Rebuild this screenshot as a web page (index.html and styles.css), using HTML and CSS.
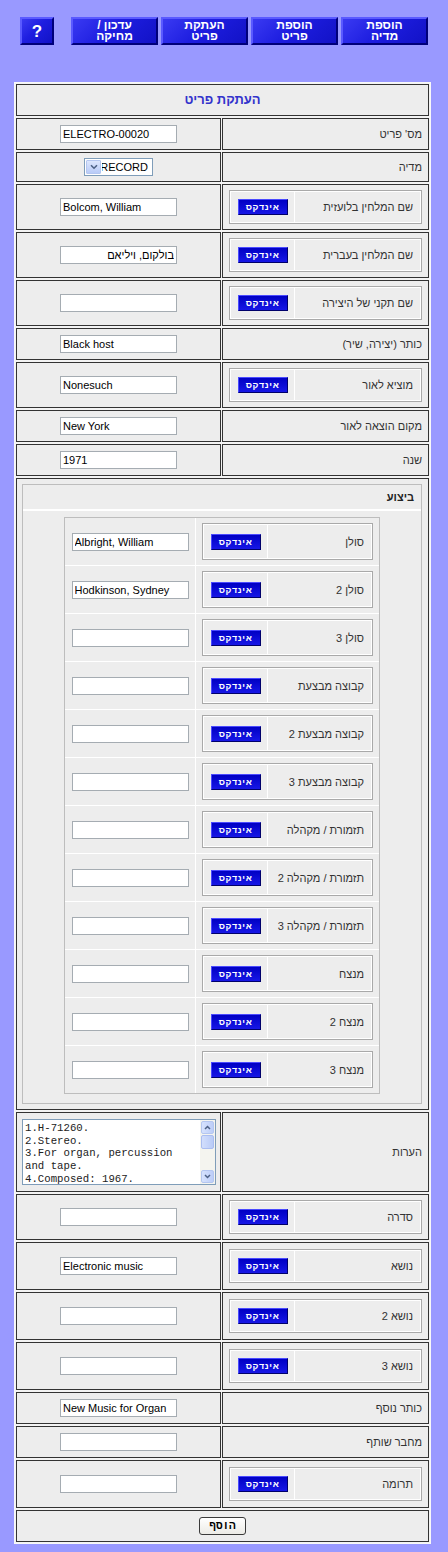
FILE: index.html
```html
<!DOCTYPE html>
<html lang="he" dir="rtl">
<head>
<meta charset="utf-8">
<title>העתקת פריט</title>
<link rel="stylesheet" href="styles.css">
</head>
<body>
<nav class="topnav">
  <a class="navbtn" href="#">הוספת<br>מדיה</a>
  <a class="navbtn" href="#">הוספת<br>פריט</a>
  <a class="navbtn" href="#">העתקת<br>פריט</a>
  <a class="navbtn" href="#">עדכון /<br>מחיקה</a>
  <a class="navbtn help" href="#">?</a>
</nav>

<form class="sheet">
  <div class="cell title">העתקת פריט</div>

  <div class="cell lbl">מס' פריט</div>
  <div class="cell fld"><input class="txt" dir="ltr" value="ELECTRO-00020"></div>

  <div class="cell lbl">מדיה</div>
  <div class="cell fld fld-sel">
    <span class="select">
      <span class="select-arrow"><svg width="8" height="6" viewBox="0 0 8 6"><path d="M1 1.2l3 3 3-3" stroke="#4d6185" stroke-width="1.6" fill="none"/></svg></span>
      <select><option>RECORD</option></select>
    </span>
  </div>

  <div class="cell lbl idx"><div class="ibox"><span class="ibox-label">שם המלחין בלועזית</span><span class="ibox-btn"><button type="button" class="idxbtn">אינדקס</button></span></div></div>
  <div class="cell fld"><input class="txt" dir="ltr" value="Bolcom, William"></div>

  <div class="cell lbl idx"><div class="ibox"><span class="ibox-label">שם המלחין בעברית</span><span class="ibox-btn"><button type="button" class="idxbtn">אינדקס</button></span></div></div>
  <div class="cell fld"><input class="txt" dir="rtl" value="בולקום, ויליאם"></div>

  <div class="cell lbl idx"><div class="ibox"><span class="ibox-label">שם תקני של היצירה</span><span class="ibox-btn"><button type="button" class="idxbtn">אינדקס</button></span></div></div>
  <div class="cell fld"><input class="txt" dir="ltr" value=""></div>

  <div class="cell lbl">כותר (יצירה, שיר)</div>
  <div class="cell fld"><input class="txt" dir="ltr" value="Black host"></div>

  <div class="cell lbl idx"><div class="ibox"><span class="ibox-label">מוציא לאור</span><span class="ibox-btn"><button type="button" class="idxbtn">אינדקס</button></span></div></div>
  <div class="cell fld"><input class="txt" dir="ltr" value="Nonesuch"></div>

  <div class="cell lbl">מקום הוצאה לאור</div>
  <div class="cell fld"><input class="txt" dir="ltr" value="New York"></div>

  <div class="cell lbl">שנה</div>
  <div class="cell fld"><input class="txt" dir="ltr" value="1971"></div>

  <div class="cell perf">
    <div class="perf-box">
      <div class="perf-head">ביצוע</div>
      <div class="perf-body">
        <div class="perf-table">
          <div class="pcell plab"><div class="ibox ibox-sm"><span class="ibox-label">סולן</span><span class="ibox-btn"><button type="button" class="idxbtn">אינדקס</button></span></div></div>
          <div class="pcell pinp"><input class="txt" dir="ltr" value="Albright, William"></div>

          <div class="pcell plab"><div class="ibox ibox-sm"><span class="ibox-label">סולן 2</span><span class="ibox-btn"><button type="button" class="idxbtn">אינדקס</button></span></div></div>
          <div class="pcell pinp"><input class="txt" dir="ltr" value="Hodkinson, Sydney"></div>

          <div class="pcell plab"><div class="ibox ibox-sm"><span class="ibox-label">סולן 3</span><span class="ibox-btn"><button type="button" class="idxbtn">אינדקס</button></span></div></div>
          <div class="pcell pinp"><input class="txt" dir="ltr" value=""></div>

          <div class="pcell plab"><div class="ibox ibox-sm"><span class="ibox-label">קבוצה מבצעת</span><span class="ibox-btn"><button type="button" class="idxbtn">אינדקס</button></span></div></div>
          <div class="pcell pinp"><input class="txt" dir="ltr" value=""></div>

          <div class="pcell plab"><div class="ibox ibox-sm"><span class="ibox-label">קבוצה מבצעת 2</span><span class="ibox-btn"><button type="button" class="idxbtn">אינדקס</button></span></div></div>
          <div class="pcell pinp"><input class="txt" dir="ltr" value=""></div>

          <div class="pcell plab"><div class="ibox ibox-sm"><span class="ibox-label">קבוצה מבצעת 3</span><span class="ibox-btn"><button type="button" class="idxbtn">אינדקס</button></span></div></div>
          <div class="pcell pinp"><input class="txt" dir="ltr" value=""></div>

          <div class="pcell plab"><div class="ibox ibox-sm"><span class="ibox-label">תזמורת / מקהלה</span><span class="ibox-btn"><button type="button" class="idxbtn">אינדקס</button></span></div></div>
          <div class="pcell pinp"><input class="txt" dir="ltr" value=""></div>

          <div class="pcell plab"><div class="ibox ibox-sm"><span class="ibox-label">תזמורת / מקהלה 2</span><span class="ibox-btn"><button type="button" class="idxbtn">אינדקס</button></span></div></div>
          <div class="pcell pinp"><input class="txt" dir="ltr" value=""></div>

          <div class="pcell plab"><div class="ibox ibox-sm"><span class="ibox-label">תזמורת / מקהלה 3</span><span class="ibox-btn"><button type="button" class="idxbtn">אינדקס</button></span></div></div>
          <div class="pcell pinp"><input class="txt" dir="ltr" value=""></div>

          <div class="pcell plab"><div class="ibox ibox-sm"><span class="ibox-label">מנצח</span><span class="ibox-btn"><button type="button" class="idxbtn">אינדקס</button></span></div></div>
          <div class="pcell pinp"><input class="txt" dir="ltr" value=""></div>

          <div class="pcell plab"><div class="ibox ibox-sm"><span class="ibox-label">מנצח 2</span><span class="ibox-btn"><button type="button" class="idxbtn">אינדקס</button></span></div></div>
          <div class="pcell pinp"><input class="txt" dir="ltr" value=""></div>

          <div class="pcell plab"><div class="ibox ibox-sm"><span class="ibox-label">מנצח 3</span><span class="ibox-btn"><button type="button" class="idxbtn">אינדקס</button></span></div></div>
          <div class="pcell pinp"><input class="txt" dir="ltr" value=""></div>
        </div>
      </div>
    </div>
  </div>

  <div class="cell lbl">הערות</div>
  <div class="cell fld fld-notes">
    <div class="memo">
      <textarea>1.H-71260.
2.Stereo.
3.For organ, percussion
and tape.
4.Composed: 1967.
5.Program notes on container.</textarea>
      <div class="memo-bar">
        <span class="sb-btn"><svg width="7" height="5" viewBox="0 0 7 5"><path d="M1 4l2.5-2.5L6 4" stroke="#4d6185" stroke-width="1.5" fill="none"/></svg></span>
        <span class="sb-thumb"></span>
        <span class="sb-track"></span>
        <span class="sb-btn"><svg width="7" height="5" viewBox="0 0 7 5"><path d="M1 1l2.5 2.5L6 1" stroke="#4d6185" stroke-width="1.5" fill="none"/></svg></span>
      </div>
    </div>
  </div>

  <div class="cell lbl idx"><div class="ibox"><span class="ibox-label">סדרה</span><span class="ibox-btn"><button type="button" class="idxbtn">אינדקס</button></span></div></div>
  <div class="cell fld"><input class="txt" dir="ltr" value=""></div>

  <div class="cell lbl idx idx-lg"><div class="ibox"><span class="ibox-label">נושא</span><span class="ibox-btn"><button type="button" class="idxbtn">אינדקס</button></span></div></div>
  <div class="cell fld"><input class="txt" dir="ltr" value="Electronic music"></div>

  <div class="cell lbl idx idx-lg"><div class="ibox"><span class="ibox-label">נושא 2</span><span class="ibox-btn"><button type="button" class="idxbtn">אינדקס</button></span></div></div>
  <div class="cell fld"><input class="txt" dir="ltr" value=""></div>

  <div class="cell lbl idx idx-lg"><div class="ibox"><span class="ibox-label">נושא 3</span><span class="ibox-btn"><button type="button" class="idxbtn">אינדקס</button></span></div></div>
  <div class="cell fld"><input class="txt" dir="ltr" value=""></div>

  <div class="cell lbl">כותר נוסף</div>
  <div class="cell fld"><input class="txt" dir="ltr" value="New Music for Organ"></div>

  <div class="cell lbl">מחבר שותף</div>
  <div class="cell fld"><input class="txt" dir="ltr" value=""></div>

  <div class="cell lbl idx idx-lg"><div class="ibox"><span class="ibox-label">תרומה</span><span class="ibox-btn"><button type="button" class="idxbtn">אינדקס</button></span></div></div>
  <div class="cell fld"><input class="txt" dir="ltr" value=""></div>

  <div class="cell actions"><button type="button" class="submit">הוסף</button></div>
</form>
</body>
</html>
```

FILE: styles.css
```css
* { box-sizing: border-box; }
html, body { margin: 0; padding: 0; }
body {
  background: #9999ff;
  font-family: "Liberation Sans", Arial, sans-serif;
  font-size: 11px;
  color: #333;
  width: 448px;
  min-height: 1552px;
}

/* top navigation */
.topnav {
  display: flex;
  gap: 3px;
  padding: 17px 20px 0 0;
  height: 45px;
}
.navbtn {
  width: 87px;
  height: 28px;
  display: flex;
  align-items: center;
  justify-content: center;
  text-align: center;
  color: #fff;
  font-weight: bold;
  font-size: 12px;
  line-height: 11px;
  text-decoration: none;
  background: linear-gradient(135deg, #3a3af2 0%, #1e1ee0 45%, #1212c6 100%);
  border: 2px solid;
  border-color: #5a5aff #00007a #00007a #5a5aff;
}
.navbtn.help {
  width: 34px;
  font-size: 17px;
  margin-right: 14px;
}

/* main sheet */
.sheet {
  display: grid;
  grid-template-columns: 207px 205px;
  column-gap: 1px;
  row-gap: 2px;
  width: 417px;
  margin: 37px 17px 0 auto;
  padding: 1px;
  border: 1px solid #f8f8f8;
  background: #f3f3f3;
}
.cell {
  border: 1px solid #333;
  background: #ededed;
}
.title {
  grid-column: 1 / -1;
  text-align: center;
  font-weight: bold;
  font-size: 13px;
  line-height: 16px;
  color: #3333cc;
  padding: 7px;
}
.lbl {
  display: flex;
  align-items: center;
  padding: 0 6px;
}
.fld {
  display: flex;
  align-items: center;
  justify-content: center;
  padding: 6px;
}
.fld-sel { padding: 5px 6px; }

.txt {
  width: 117px;
  height: 18px;
  margin: 0;
  border: 1px solid #a5acb2;
  background: #fff;
  font: 11px "Liberation Sans", Arial, sans-serif;
  color: #000;
  padding: 0 2px;
}

/* select */
.select {
  display: inline-flex;
  width: 69px;
  height: 18px;
  border: 1px solid #7f9db9;
  background: #fff;
  direction: ltr;
}
.select-arrow {
  width: 15px;
  margin: 1px;
  display: flex;
  align-items: center;
  justify-content: center;
  background: linear-gradient(#dce6fd, #b9cbf7);
  border: 1px solid #b4c6f0;
  border-radius: 1px;
}
.select select {
  flex: 1;
  min-width: 0;
  -webkit-appearance: none;
  appearance: none;
  border: 0;
  background: transparent;
  font: 11px "Liberation Sans", Arial, sans-serif;
  color: #000;
  text-align: right;
  padding: 0 4px 0 0;
  direction: rtl;
}

/* index box */
.idx { padding: 5px 6px; }
.idx-lg { padding: 6px; }
.ibox {
  display: grid;
  grid-template-columns: 1fr 63px;
  width: 100%;
  height: 34px;
  border: 1px solid #a9a9a9;
  padding: 1px;
  gap: 1px;
  background: #fff;
}
.ibox-label {
  background: #ededed;
  display: flex;
  align-items: center;
  padding: 0 7px;
}
.ibox-btn {
  background: #ededed;
  display: flex;
  align-items: center;
  justify-content: center;
}
.idxbtn {
  width: 50px;
  height: 16px;
  padding: 0;
  margin: 0;
  border: 1px solid;
  border-color: #4a4aff #00006a #00006a #4a4aff;
  background: linear-gradient(#0000c4, #1717e6);
  color: #fff;
  font: bold 9px "Liberation Sans", Arial, sans-serif;
  letter-spacing: 0.6px;
  cursor: pointer;
}

/* performance block */
.perf {
  grid-column: 1 / -1;
  padding: 5px 6px 5px 5px;
}
.perf-box {
  border: 1px solid #bdbdbd;
  background: #ededed;
}
.perf-head {
  height: 26px;
  display: flex;
  align-items: center;
  padding: 0 7px;
  font-weight: bold;
  color: #222;
  border-bottom: 2px solid #fff;
}
.perf-body {
  display: flex;
  justify-content: center;
  padding: 6px 0 9px;
}
.perf-table {
  display: grid;
  grid-template-columns: 183px 130px;
  gap: 1px;
  width: 316px;
  border: 1px solid #bdbdbd;
  background: #fff;
}
.pcell {
  background: #ededed;
  display: flex;
  align-items: center;
}
.plab { padding: 5px 6px; }
.pinp {
  justify-content: center;
  height: 47px;
}
.ibox-sm { height: 37px; }

/* notes */
.fld-notes { padding: 6px 4px 6px 5px; }
.memo {
  display: flex;
  direction: ltr;
  width: 100%;
  height: 66px;
  border: 1px solid #7f9db9;
  background: #fff;
}
.memo textarea {
  flex: 1;
  min-width: 0;
  margin: 0;
  border: 0;
  resize: none;
  overflow: hidden;
  font: 10.7px/12.7px "Liberation Mono", "Courier New", monospace;
  color: #222;
  padding: 2px 2px;
  direction: ltr;
  text-align: left;
}
.memo-bar {
  width: 15px;
  display: flex;
  flex-direction: column;
  background: #f4f4ef;
  padding: 1px;
}
.sb-btn {
  height: 13px;
  display: flex;
  align-items: center;
  justify-content: center;
  background: linear-gradient(90deg, #d6e2fd, #bccdf8);
  border: 1px solid #b4c6f0;
  border-radius: 2px;
}
.sb-thumb {
  height: 14px;
  margin-top: 1px;
  background: linear-gradient(90deg, #d2defc, #b9cbf7);
  border: 1px solid #aabdf0;
  border-radius: 2px;
}
.sb-track { flex: 1; }

/* submit */
.actions {
  grid-column: 1 / -1;
  display: flex;
  justify-content: center;
  align-items: center;
  padding: 6px;
}
.submit {
  width: 47px;
  height: 18px;
  margin: 0;
  padding: 0;
  border: 1px solid #3a3a3a;
  border-radius: 3px;
  background: linear-gradient(#ffffff, #ecebe6);
  font: bold 11px "Liberation Mono", "DejaVu Sans Mono", monospace;
  color: #000;
}
```
